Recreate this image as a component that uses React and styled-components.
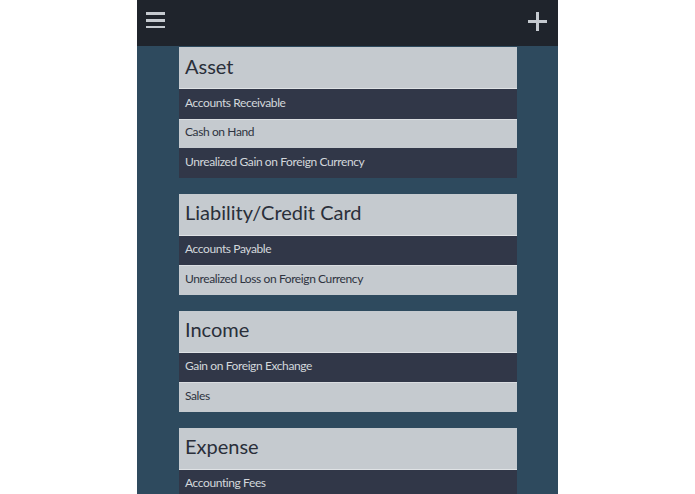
import React from "react";
import styled, { createGlobalStyle } from "styled-components";

const Global = createGlobalStyle`
  html, body { margin: 0; padding: 0; background: #ffffff; }
  body { font-family: "Lato", "Noto Sans", sans-serif; }
  * { box-sizing: border-box; }
`;

const Phone = styled.div`
  width: 421px;
  height: 494px;
  margin: 0 auto;
  background: #2e4a5e;
  overflow: hidden;
  display: flex;
  flex-direction: column;
`;

const TopBar = styled.header`
  height: 46px;
  flex: none;
  background: #1f242c;
  display: flex;
  align-items: flex-start;
  justify-content: space-between;
  padding: 11px 10px 0 9px;
`;

const IconButton = styled.button`
  border: 0;
  padding: 0;
  background: none;
  display: flex;
  color: #c5cad0;
  cursor: pointer;
`;

const Content = styled.main`
  flex: 1;
  padding: 1px 41px 0 42px;
  display: flex;
  flex-direction: column;
  gap: 16px;
`;

const Group = styled.section`
  display: flex;
  flex-direction: column;
`;

const GroupHeader = styled.h2`
  margin: 0;
  height: 42px;
  display: flex;
  align-items: center;
  padding: 0 6px 4px;
  background: #c5cacf;
  border-bottom: 1px solid #dfe2e5;
  color: #2a2f3a;
  font-size: 20px;
  font-weight: 400;
  letter-spacing: 0;
`;

const Row = styled.div`
  height: 29.5px;
  display: flex;
  align-items: center;
  padding: 0 6px 4px;
  font-size: 12px;
  letter-spacing: -0.4px;
  background: ${(p) => (p.$dark ? "#313748" : "#c5cacf")};
  color: ${(p) => (p.$dark ? "#d3d7dc" : "#2e3340")};
  border-top: 1px solid ${(p) => (p.$dark ? "#313748" : "#dadde1")};
`;

const groups = [
  { title: "Asset", items: ["Accounts Receivable", "Cash on Hand", "Unrealized Gain on Foreign Currency"] },
  { title: "Liability/Credit Card", items: ["Accounts Payable", "Unrealized Loss on Foreign Currency"] },
  { title: "Income", items: ["Gain on Foreign Exchange", "Sales"] },
  { title: "Expense", items: ["Accounting Fees"] },
];

const Menu = () => (
  <svg width="20" height="17" viewBox="0 0 20 17" fill="currentColor">
    <rect x="0" y="1" width="19" height="3" />
    <rect x="0" y="8" width="19" height="3" />
    <rect x="0" y="15" width="19" height="3" />
  </svg>
);

const Plus = () => (
  <svg width="20" height="20" viewBox="0 0 20 20" fill="currentColor">
    <rect x="8" y="1" width="3" height="19" />
    <rect x="0" y="9" width="19" height="3" />
  </svg>
);

export default function App() {
  return (
    <>
      <Global />
      <Phone>
        <TopBar>
          <IconButton aria-label="menu"><Menu /></IconButton>
          <IconButton aria-label="add"><Plus /></IconButton>
        </TopBar>
        <Content>
          {groups.map((g) => (
            <Group key={g.title}>
              <GroupHeader>{g.title}</GroupHeader>
              {g.items.map((it, i) => (
                <Row key={it} $dark={i % 2 === 0}>{it}</Row>
              ))}
            </Group>
          ))}
        </Content>
      </Phone>
    </>
  );
}
